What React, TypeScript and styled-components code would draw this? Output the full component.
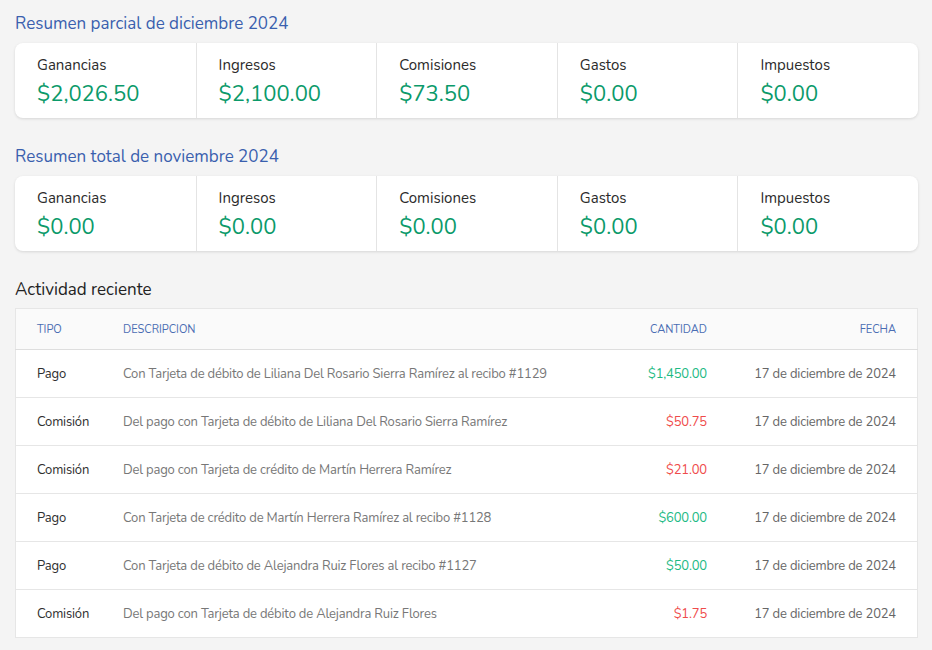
import styled, { createGlobalStyle } from "styled-components";

const GlobalStyle = createGlobalStyle`
  body {
    margin: 0;
    background: #f4f4f4;
    font-family: "Nunito", Lato, "Noto Sans", sans-serif;
  }
`;

const Page = styled.div`
  padding: 13px 14px 14px 15px;
`;

const SectionTitle = styled.h2<{ $dark?: boolean; $gap?: number }>`
  margin: 0 0 ${({ $gap }) => $gap ?? 8}px 0;
  font-size: 17px;
  font-weight: 400;
  line-height: 22px;
  color: ${({ $dark }) => ($dark ? "#222" : "#3a5fae")};
`;

const SummaryCard = styled.div`
  display: grid;
  grid-template-columns: repeat(5, 1fr);
  background: #fff;
  border-radius: 8px;
  box-shadow: 0 1px 3px rgba(0, 0, 0, 0.12);
  margin-bottom: 28px;
`;

const Stat = styled.div`
  padding: 12px 22px 6px 22px;
  border-left: 1px solid #e4e4e4;
  &:first-child {
    border-left: none;
  }
`;

const StatLabel = styled.div`
  font-size: 15px;
  line-height: 20px;
  color: #2b2b2b;
`;

const StatValue = styled.div`
  margin-top: 1px;
  font-size: 22px;
  line-height: 36px;
  color: #0b9a6a;
`;

const Table = styled.table`
  width: 100%;
  border-collapse: collapse;
  background: #fff;
  border: 1px solid #e6e6e6;
  font-size: 13px;
  letter-spacing: -0.18px;
`;

const HeadCell = styled.th<{ $right?: boolean }>`
  height: 40px;
  padding: 0 21px 0 21px;
  text-align: ${({ $right }) => ($right ? "right" : "left")};
  font-size: 11px;
  font-weight: 400;
  letter-spacing: 0;
  text-transform: uppercase;
  color: #4a6db3;
  background: #fafafa;
  border-bottom: 1px solid #dedede;
  &:nth-child(2) {
    padding-left: 0;
  }
  &:nth-child(3) {
    padding-right: 10px;
  }
`;

const Row = styled.tr`
  border-bottom: 1px solid #e6e6e6;
  &:last-child {
    border-bottom: none;
  }
`;

const Cell = styled.td<{ $right?: boolean; $color?: string }>`
  height: 47px;
  padding: 0 21px;
  text-align: ${({ $right }) => ($right ? "right" : "left")};
  color: ${({ $color }) => $color || "#2e2e2e"};
  white-space: nowrap;
  &:nth-child(2) {
    padding-left: 0;
  }
  &:nth-child(3) {
    padding-right: 10px;
  }
`;

type Activity = {
  tipo: string;
  desc: string;
  amount: string;
  positive: boolean;
};

const activities: Activity[] = [
  { tipo: "Pago", desc: "Con Tarjeta de débito de Liliana Del Rosario Sierra Ramírez al recibo #1129", amount: "$1,450.00", positive: true },
  { tipo: "Comisión", desc: "Del pago con Tarjeta de débito de Liliana Del Rosario Sierra Ramírez", amount: "$50.75", positive: false },
  { tipo: "Comisión", desc: "Del pago con Tarjeta de crédito de Martín Herrera Ramírez", amount: "$21.00", positive: false },
  { tipo: "Pago", desc: "Con Tarjeta de crédito de Martín Herrera Ramírez al recibo #1128", amount: "$600.00", positive: true },
  { tipo: "Pago", desc: "Con Tarjeta de débito de Alejandra Ruiz Flores al recibo #1127", amount: "$50.00", positive: true },
  { tipo: "Comisión", desc: "Del pago con Tarjeta de débito de Alejandra Ruiz Flores", amount: "$1.75", positive: false },
];

const Summary = ({ values }: { values: string[] }) => {
  const labels = ["Ganancias", "Ingresos", "Comisiones", "Gastos", "Impuestos"];
  return (
    <SummaryCard>
      {labels.map((label, i) => (
        <Stat key={label}>
          <StatLabel>{label}</StatLabel>
          <StatValue>{values[i]}</StatValue>
        </Stat>
      ))}
    </SummaryCard>
  );
};

export default function App() {
  return (
    <Page>
      <GlobalStyle />
      <SectionTitle>Resumen parcial de diciembre 2024</SectionTitle>
      <Summary values={["$2,026.50", "$2,100.00", "$73.50", "$0.00", "$0.00"]} />
      <SectionTitle>Resumen total de noviembre 2024</SectionTitle>
      <Summary values={["$0.00", "$0.00", "$0.00", "$0.00", "$0.00"]} />
      <SectionTitle $dark $gap={7}>Actividad reciente</SectionTitle>
      <Table>
        <thead>
          <tr>
            <HeadCell style={{ width: 65 }}>Tipo</HeadCell>
            <HeadCell>Descripcion</HeadCell>
            <HeadCell $right>Cantidad</HeadCell>
            <HeadCell $right style={{ width: 158 }}>Fecha</HeadCell>
          </tr>
        </thead>
        <tbody>
          {activities.map((a, i) => (
            <Row key={i}>
              <Cell>{a.tipo}</Cell>
              <Cell $color="#777">{a.desc}</Cell>
              <Cell $right $color={a.positive ? "#1dba84" : "#ef4b4b"}>
                {a.amount}
              </Cell>
              <Cell $right $color="#666">
                17 de diciembre de 2024
              </Cell>
            </Row>
          ))}
        </tbody>
      </Table>
    </Page>
  );
}
